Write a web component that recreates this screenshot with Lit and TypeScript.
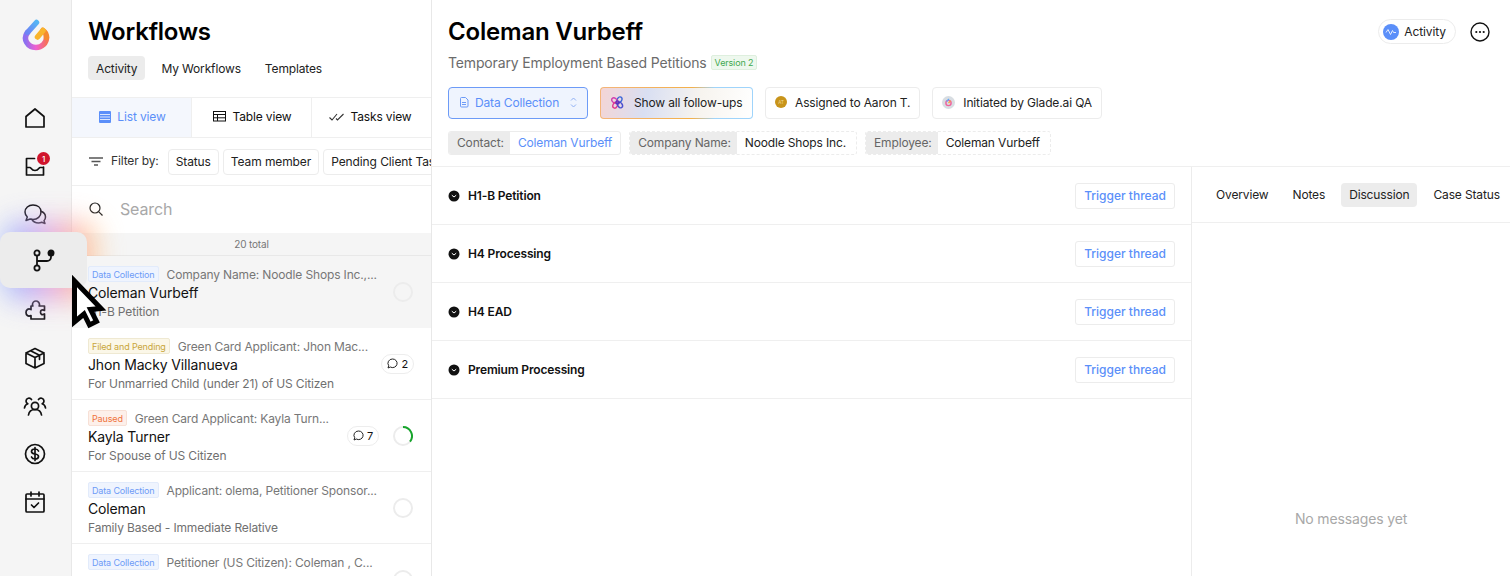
import { LitElement, html, css, svg } from 'lit';
import { customElement } from 'lit/decorators.js';

const stroke = (body: unknown, w = 1.7) => html`<svg width="24" height="24" viewBox="0 0 24 24" fill="none" stroke="#111" stroke-width=${w} stroke-linecap="round" stroke-linejoin="round">${body}</svg>`;

const NAV = [
  { icon: stroke(svg`<path d="M3 21V10.500L12 3l9 7.500V21z"/>`) },
  { icon: stroke(svg`<path d="M3.500 4.500v16.500h17V13M3.500 13.500H7c1 0 1.400 3 5 3s4-3 5-3h3.500M3.500 4.500h8"/>`), badge: '1' },
  { icon: stroke(svg`<path d="M10 3C5.500 3 2 6 2 10c0 2 .9 3.700 2.300 5L3 18.500l4.200-1.500c.9.3 1.800.4 2.800.4 4.500 0 8-3 8-7.400S14.500 3 10 3z"/><path d="M18 9.200c2.700 1 4.500 3.200 4.500 5.800 0 1.500-.5 2.800-1.500 3.800l1 2.700-3.300-1.200c-1 .4-2 .6-3.200.6-3 0-5.500-1.300-6.700-3.500"/>`, 1.5) },
  { icon: stroke(svg`<circle cx="6" cy="5" r="2.600"/><circle cx="6" cy="20" r="2.600"/><circle cx="20" cy="5" r="2.600" fill="#111"/><path d="M6 7.600v9.800M6 13h10a4 4 0 0 0 4-4V7.600"/>`, 1.8), active: true },
  { icon: stroke(svg`<g transform="translate(1.500 0)"><path d="M8 6.500a3.500 3.500 0 1 1 7 0c0 .8-.3 1.200-.3 1.500H20v4.500c-3-1.500-4 .2-4 1.700s1 3.300 4 1.800V21H6.500v-3.500C3.500 19 1.500 17 1.500 14.500S3.500 10 6.500 11.500V8H8.300c0-.4-.3-.8-.3-1.500z"/></g>`) },
  { icon: stroke(svg`<path d="M12 2.500l9 4.500v10.500l-9 4.500-9-4.500V7zM3 7l9 4.500L21 7M12 11.500V22M7.500 4.800l9 4.500v4"/>`) },
  { icon: stroke(svg`<circle cx="12" cy="12" r="3.600"/><path d="M5.500 21c.5-3.500 3-5.500 6.500-5.500s6 2 6.500 5.500M8.500 5.500a3 3 0 0 0-5.500 1.500c0 1.300.8 2.200 1.800 2.800C3 10.500 1.700 12 1.500 14M15.500 5.500A3 3 0 0 1 21 7c0 1.300-.8 2.200-1.800 2.800 1.800.7 3.100 2.200 3.300 4.200"/>`) },
  { icon: stroke(svg`<circle cx="12" cy="12" r="9.500"/><path d="M15.500 9c-.5-1.300-2-2-3.500-2-2 0-3.500 1-3.500 2.500S10 11.700 12 12s3.500 1 3.500 2.500S14 17 12 17c-1.500 0-3-.7-3.500-2M12 5.500v13"/>`) },
  { icon: stroke(svg`<rect x="3" y="4" width="18" height="18" rx="1"/><path d="M3 9h18M8 2v4M16 2v4M8.500 15l2.500 2.500 4.500-4.500"/>`) },
];

const ITEMS = [
  { tag: 'Data Collection', kind: 'blue', meta: 'Company Name: Noodle Shops Inc.,...', name: 'Coleman Vurbeff', sub: 'H1-B Petition', ring: true, selected: true },
  { tag: 'Filed and Pending', kind: 'gold', meta: 'Green Card Applicant: Jhon Mac...', name: 'Jhon Macky Villanueva', sub: 'For Unmarried Child (under 21) of US Citizen', count: '2' },
  { tag: 'Paused', kind: 'red', meta: 'Green Card Applicant: Kayla Turn...', name: 'Kayla Turner', sub: 'For Spouse of US Citizen', count: '7', ring: true, progress: true },
  { tag: 'Data Collection', kind: 'blue', meta: 'Applicant: olema, Petitioner Sponsor...', name: 'Coleman', sub: 'Family Based - Immediate Relative', ring: true },
  { tag: 'Data Collection', kind: 'blue', meta: 'Petitioner (US Citizen): Coleman , C...', name: '', sub: '', ring: true },
];

const THREADS = ['H1-B Petition', 'H4 Processing', 'H4 EAD', 'Premium Processing'];

@customElement('app-root')
export class AppRoot extends LitElement {
  static override styles = css`
    * { box-sizing: border-box; }
    :host {
      display: flex;
      position: relative;
      width: 1510px;
      height: 576px;
      overflow: hidden;
      background: #fff;
      color: #111;
      font-family: Inter, "Liberation Sans", sans-serif;
      font-size: 12px;
      letter-spacing: -0.012em;
    }
    svg { display: block; flex: none; }

    .rail {
      width: 72px;
      flex: none;
      background: #f5f5f5;
      border-right: 1px solid #e8e8e8;
      position: relative;
      z-index: 2;
    }
    .logo { padding: 18px 0 0 21px; height: 94px; }
    .nav-item {
      height: 48px;
      display: flex;
      align-items: center;
      padding-left: 23px;
      position: relative;
    }
    .badge {
      position: absolute;
      left: 37px;
      top: 10px;
      width: 13px;
      height: 13px;
      border-radius: 50%;
      background: #d0142c;
      color: #fff;
      font-size: 8px;
      font-weight: 500;
      display: flex;
      align-items: center;
      justify-content: center;
    }
    .glow-clip {
      position: absolute;
      left: -30px;
      top: -50px;
      width: 170px;
      height: 150px;
      clip-path: polygon(0 0, 100% 0, 100% 68px, 102px 68px, 102px 100%, 0 100%);
      pointer-events: none;
    }
    .glow {
      position: absolute;
      left: 34px;
      top: 34px;
      width: 92px;
      height: 78px;
      border-radius: 16px;
      background: linear-gradient(90deg, #7fb0ff 0%, #b79cf5 30%, #f39ad0 60%, #ffb27a 85%, #ffd9a0 100%);
      filter: blur(14px);
      opacity: 0.8;
    }
    .nav-item.active { z-index: 3; }
    .tile {
      position: absolute;
      left: 0;
      top: -6px;
      width: 87px;
      height: 56px;
      background: #ececec;
      border-radius: 10px;
      display: flex;
      align-items: center;
      padding-left: 31px;
    }

    .list {
      width: 360px;
      flex: none;
      border-right: 1px solid #e8e8e8;
      display: flex;
      flex-direction: column;
      overflow: hidden;
    }
    .list-head { padding: 17px 16px 0; height: 97px; flex: none; }
    h1 { margin: 0; font-size: 24px; line-height: 30px; font-weight: 600; letter-spacing: -0.2px; color: #000; }
    .tabs { display: flex; gap: 8px; margin-top: 9px; }
    .tab {
      height: 24px;
      padding: 0 8px;
      border-radius: 4px;
      display: flex;
      align-items: center;
      font-size: 12px;
      color: #222;
    }
    .tab.on { background: #ececec; }
    .views {
      display: grid;
      grid-template-columns: 120px 120px 120px;
      height: 41px;
      flex: none;
      border-top: 1px solid #efefef;
      border-bottom: 1px solid #efefef;
    }
    .view {
      display: flex;
      align-items: center;
      justify-content: center;
      gap: 6px;
      font-size: 12px;
      padding: 0 0 2px 2px;
      border-right: 1px solid #efefef;
    }
    .view:last-child { border-right: 0; padding: 0 3px 2px 0; }
    .view.on { background: #f4f7fd; color: #5b8ff9; }
    .filters {
      height: 48px;
      flex: none;
      display: flex;
      align-items: center;
      padding-left: 17px;
      border-bottom: 1px solid #efefef;
      white-space: nowrap;
    }
    .filters .lbl { margin: 0 9px 2px 8px; color: #333; }
    .chip {
      height: 26px;
      padding: 0 7px;
      border: 1px solid #ececec;
      border-radius: 4px;
      display: flex;
      align-items: center;
      margin-right: 4px;
      flex: none;
      color: #222;
      letter-spacing: -0.1px;
    }
    .search {
      height: 47px;
      display: flex;
      align-items: center;
      padding: 0 0 1px 17px;
      gap: 17px;
      font-size: 16px;
      color: #a8a8a8;
      flex: none;
    }
    .total {
      height: 23px;
      flex: none;
      background: #f5f5f5;
      border-bottom: 1px solid #e8e8e8;
      font-size: 10px;
      color: #777;
      display: flex;
      align-items: center;
      justify-content: center;
    }
    .item {
      height: 72px;
      flex: none;
      display: flex;
      align-items: center;
      padding: 0 18px 0 16px;
      border-bottom: 1px solid #efefef;
    }
    .item.sel { background: #f5f5f5; border-bottom: 0; }
    .item-body { flex: 1; min-width: 0; align-self: flex-start; padding-top: 9px; }
    .item-top { display: flex; align-items: center; gap: 8px; height: 18px; font-size: 12px; color: #777; white-space: nowrap; }
    .tag {
      height: 16px;
      padding: 0 3px;
      border-radius: 2px;
      font-size: 9px;
      display: flex;
      align-items: center;
      border: 1px solid;
      flex: none;
    }
    .tag.blue { color: #6d9bf7; background: #eff4fe; border-color: #e2ebfb; }
    .tag.gold { color: #c9a63a; background: #fbf7e8; border-color: #efe9d2; }
    .tag.red { color: #f0733c; background: #fdf0ea; border-color: #f7e0d6; }
    .item-name { font-size: 14px; line-height: 20px; color: #111; }
    .item-sub { font-size: 12px; line-height: 16px; margin-top: 1px; color: #707070; white-space: nowrap; }
    .count {
      height: 20px;
      padding: 0 5px;
      border: 1px solid #ededed;
      border-radius: 10px;
      display: flex;
      align-items: center;
      gap: 3px;
      font-size: 11px;
      background: #fff;
      flex: none;
    }
    .count.solo { margin-right: -1px; }
    .ring { margin-left: 14px; flex: none; }

    .main { flex: 1; min-width: 0; display: flex; flex-direction: column; }
    .main-head { height: 167px; padding: 17px 16px 0; border-bottom: 1px solid #efefef; position: relative; flex: none; }
    .subtitle { display: flex; align-items: center; gap: 4px; margin-top: 6px; height: 19px; font-size: 14px; color: #6b6b6b; }
    .ver {
      height: 15px;
      padding: 0 3px;
      font-size: 9px;
      color: #3fa84f;
      background: #eef8ee;
      border: 1px solid #deefde;
      border-radius: 2px;
      display: flex;
      align-items: center;
    }
    .actions { display: flex; gap: 12px; margin-top: 15px; white-space: nowrap; }
    .btn {
      height: 32px;
      padding: 0 9px 2px;
      border: 1px solid #ececec;
      border-radius: 4px;
      display: flex;
      align-items: center;
      gap: 7px;
      font-size: 12px;
      color: #222;
      background: #fff;
      flex: none;
    }
    .btn.stage { width: 140px; background: #eff4fe; border-color: #6d9bf7; color: #5b8ff9; padding: 0 10px 2px; gap: 5px; }
    .btn.stage .grow { flex: 1; }
    .btn.ai {
      width: 153px;
      padding: 0 9px 2px 10px;
      gap: 10px;
      border-color: transparent;
      background:
        linear-gradient(100deg, #f4d5d5 0%, #d9dff2 30%, #f7f4ef 65%, #fff 100%) padding-box,
        linear-gradient(90deg, #f4b57a 0%, #f3b04a 60%, #9fd4fb 75%, #9fd4fb 100%) border-box;
    }
    .btn.avatar { gap: 8px; }
    .fields { display: flex; gap: 8px; margin-top: 12px; }
    .field {
      height: 24px;
      display: flex;
      align-items: stretch;
      border: 1px solid #ececec;
      border-radius: 3px;
      overflow: hidden;
      font-size: 12px;
    }
    .field.dash { border-style: dashed; }
    .field .k { background: #ececec; color: #666; padding: 0 6px 2px 8px; display: flex; align-items: center; }
    .field .v { padding: 0 8px 2px; display: flex; align-items: center; color: #222; }
    .field.dash .v { padding-right: 10px; }
    .field .v.link { color: #5b8ff9; }
    .head-right { position: absolute; right: 20px; top: 19px; display: flex; align-items: center; gap: 14px; }
    .pill {
      height: 25px;
      padding: 0 9px 0 4px;
      border: 1px solid #ececec;
      border-radius: 13px;
      display: flex;
      align-items: center;
      gap: 5px;
      font-size: 12px;
      color: #222;
      letter-spacing: -0.1px;
    }

    .split { flex: 1; display: flex; min-height: 0; }
    .threads { width: 760px; flex: none; border-right: 1px solid #ececec; }
    .thread {
      height: 58px;
      display: flex;
      align-items: center;
      padding: 0 16px;
      gap: 8px;
      border-bottom: 1px solid #efefef;
      font-size: 12px;
      font-weight: 600;
      color: #111;
    }
    .thread .grow { flex: 1; }
    .trigger {
      height: 26px;
      padding: 0 8px;
      border: 1px solid #ececec;
      border-radius: 3px;
      display: flex;
      align-items: center;
      color: #5b8ff9;
      font-weight: 500;
      letter-spacing: 0;
    }
    .panel { flex: 1; min-width: 0; display: flex; flex-direction: column; }
    .panel-tabs {
      height: 56px;
      flex: none;
      display: flex;
      align-items: center;
      gap: 8px;
      padding-left: 16px;
      border-bottom: 1px solid #efefef;
      white-space: nowrap;
    }
    .empty {
      flex: 1;
      display: flex;
      justify-content: center;
      align-items: flex-start;
      font-size: 14px;
      color: #a8a8a8;
      padding-top: 287px;
    }
    .cursor { position: absolute; left: 68px; top: 273px; z-index: 5; }
  `;

  override render() {
    return html`
      <aside class="rail">
        <div class="logo">${this.logo()}</div>
        ${NAV.map((n) => html`
          <div class="nav-item ${n.active ? 'active' : ''}">
            ${n.active
              ? html`<div class="glow-clip"><div class="glow"></div></div><div class="tile">${n.icon}</div>`
              : n.icon}
            ${n.badge ? html`<span class="badge">${n.badge}</span>` : ''}
          </div>
        `)}
      </aside>

      <section class="list">
        <div class="list-head">
          <h1>Workflows</h1>
          <div class="tabs">
            <div class="tab on">Activity</div>
            <div class="tab">My Workflows</div>
            <div class="tab">Templates</div>
          </div>
        </div>
        <div class="views">
          <div class="view on">
            <svg width="12" height="12" viewBox="0 0 12 12"><rect width="12" height="12" rx="1" fill="#5b8ff9"/><path d="M1 3.500h10M1 6h10M1 8.500h10" stroke="#dbe6fd"/></svg>
            List view
          </div>
          <div class="view">
            <svg width="13" height="11" viewBox="0 0 13 11" fill="none" stroke="#111"><rect x=".5" y=".5" width="12" height="9.500"/><path d="M.5 3.500h12M.5 6.800h12M4.500 3.500V10"/></svg>
            Table view
          </div>
          <div class="view">
            <svg width="15" height="8" viewBox="0 0 15 8" fill="none" stroke="#333" stroke-width="1.100"><path d="M.5 4.500L3 7 8 1M7 5.500L8.500 7 14.500 1"/></svg>
            Tasks view
          </div>
        </div>
        <div class="filters">
          <svg width="14" height="9" viewBox="0 0 14 9" fill="none" stroke="#555" stroke-width="1.300"><path d="M0 1h14M2.500 4.500h9M5 8h4"/></svg>
          <span class="lbl">Filter by:</span>
          <div class="chip">Status</div>
          <div class="chip">Team member</div>
          <div class="chip">Pending Client Tasks</div>
        </div>
        <div class="search">
          <svg width="14" height="14" viewBox="0 0 14 14" fill="none" stroke="#222" stroke-width="1.200"><circle cx="6" cy="6" r="5"/><path d="M9.800 9.800L13.500 13.500"/></svg>
          <span>Search</span>
        </div>
        <div class="total">20 total</div>
        ${ITEMS.map((it) => html`
          <div class="item ${it.selected ? 'sel' : ''}">
            <div class="item-body">
              <div class="item-top"><span class="tag ${it.kind}">${it.tag}</span><span>${it.meta}</span></div>
              ${it.name ? html`<div class="item-name">${it.name}</div><div class="item-sub">${it.sub}</div>` : ''}
            </div>
            ${it.count ? html`<div class="count ${it.ring ? '' : 'solo'}">${this.bubble()}${it.count}</div>` : ''}
            ${it.ring ? this.ring(!!it.progress) : ''}
          </div>
        `)}
      </section>

      <main class="main">
        <div class="main-head">
          <h1>Coleman Vurbeff</h1>
          <div class="subtitle">Temporary Employment Based Petitions <span class="ver">Version 2</span></div>
          <div class="actions">
            <div class="btn stage">
              <svg width="11" height="12" viewBox="0 0 11 12" fill="none" stroke="#6d9bf7"><path d="M2.500 1.500h4l2.500 2.500v6a1 1 0 0 1-1 1h-5.500a1 1 0 0 1-1-1v-7.500a1 1 0 0 1 1-1zM3 6.500h4M3 8.500h4"/></svg>
              <span>Data Collection</span>
              <span class="grow"></span>
              <svg width="7" height="11" viewBox="0 0 7 11" fill="none" stroke="#8fb0f5"><path d="M1 3.500L3.500 1 6 3.500M1 7.500L3.500 10 6 7.500"/></svg>
            </div>
            <div class="btn ai">
              <svg width="13" height="13" viewBox="0 0 13 13" fill="none" stroke-width="1.400">
                <ellipse cx="8.500" cy="3.800" rx="2.200" ry="3" stroke="#3b66d8" transform="rotate(30 8.500 3.800)"/>
                <ellipse cx="3.500" cy="4.500" rx="2.200" ry="3" stroke="#d13fb0" transform="rotate(-50 3.500 4.500)"/>
                <ellipse cx="4.200" cy="9.200" rx="2.200" ry="3" stroke="#e0398f" transform="rotate(25 4.200 9.200)"/>
                <ellipse cx="9" cy="9" rx="2.200" ry="3" stroke="#4a50d0" transform="rotate(-35 9 9)"/>
                <circle cx="6.500" cy="6.500" r="1.600" stroke="#5b2fc0"/>
              </svg>
              Show all follow-ups
            </div>
            <div class="btn avatar">
              <svg width="12" height="12" viewBox="0 0 12 12"><circle cx="6" cy="6" r="6" fill="#c8941a"/><text x="6" y="7.700" font-size="4.500" text-anchor="middle" fill="#f0d999">AT</text></svg>
              <span>Assigned to Aaron T.</span>
            </div>
            <div class="btn avatar">
              <svg width="13" height="13" viewBox="0 0 13 13" fill="none"><circle cx="6.500" cy="6.500" r="6.500" fill="#d8dde2"/><circle cx="6.500" cy="7" r="2.600" stroke="#f0609c" stroke-width="1.400"/><path d="M4.500 5.500l2.500-2.500" stroke="#5fa8f8" stroke-width="1.300"/><path d="M8.500 5l-2 2" stroke="#f3a63a" stroke-width="1.300"/></svg>
              <span>Initiated by Glade.ai QA</span>
            </div>
          </div>
          <div class="fields">
            <div class="field"><span class="k">Contact:</span><span class="v link">Coleman Vurbeff</span></div>
            <div class="field dash"><span class="k">Company Name:</span><span class="v">Noodle Shops Inc.</span></div>
            <div class="field dash"><span class="k">Employee:</span><span class="v">Coleman Vurbeff</span></div>
          </div>
          <div class="head-right">
            <div class="pill">
              <svg width="16" height="16" viewBox="0 0 16 16" fill="none"><circle cx="8" cy="8" r="8" fill="#5b8ff9"/><path d="M3 8.500l2-3 2.500 5 2-4 1 2H13" stroke="#e3ecfe" stroke-width="1"/></svg>
              Activity
            </div>
            <svg width="20" height="20" viewBox="0 0 20 20" fill="none"><circle cx="10" cy="10" r="9" stroke="#111" stroke-width="1.400"/><circle cx="6.300" cy="10" r="1.100" fill="#111"/><circle cx="10" cy="10" r="1.100" fill="#111"/><circle cx="13.700" cy="10" r="1.100" fill="#111"/></svg>
          </div>
        </div>
        <div class="split">
          <div class="threads">
            ${THREADS.map((t) => html`
              <div class="thread">
                <svg width="12" height="12" viewBox="0 0 12 12"><circle cx="6" cy="6" r="5.500" fill="#111"/><path d="M3.800 5.200l2.200 1.800 2.200-1.800" fill="none" stroke="#fff" stroke-width="1"/></svg>
                <span>${t}</span>
                <span class="grow"></span>
                <div class="trigger">Trigger thread</div>
              </div>
            `)}
          </div>
          <div class="panel">
            <div class="panel-tabs">
              <div class="tab">Overview</div>
              <div class="tab">Notes</div>
              <div class="tab on">Discussion</div>
              <div class="tab">Case Status</div>
            </div>
            <div class="empty">No messages yet</div>
          </div>
        </div>
      </main>

      <svg class="cursor" width="42" height="58" viewBox="0 0 42 58"><path d="M6.500 8v41l9.500-8 5.500 11 7-3.500-6-12 10.500-1z" fill="#fff" stroke="#000" stroke-width="5" stroke-linejoin="miter"/></svg>
    `;
  }

  logo() {
    return html`<svg width="32" height="34" viewBox="0 0 32 34" fill="none" stroke-width="5.500" stroke-linecap="round">
      <defs>
        <linearGradient id="lg1" x1="1" y1="0" x2="0" y2="1"><stop offset="0" stop-color="#55b4f5"/><stop offset="1" stop-color="#6d84f5"/></linearGradient>
        <linearGradient id="lg2" x1="0" y1="0" x2="1" y2="0"><stop offset="0" stop-color="#8d70f0"/><stop offset=".5" stop-color="#f05fd0"/><stop offset="1" stop-color="#f5705a"/></linearGradient>
      </defs>
      <path d="M6.500 14.500C1.500 21 6.500 29.500 15 29.500c6 0 10.500-4.500 10.500-10" stroke="url(#lg2)"/>
      <path d="M15.500 4.500L6.500 14.500" stroke="url(#lg1)"/>
      <path d="M25.500 19.500c0-3-1-5.500-3.500-7" stroke="#f58a30"/>
      <path d="M22 12.500L16.500 19" stroke="#f9b42c"/>
    </svg>`;
  }

  bubble() {
    return html`<svg width="11" height="11" viewBox="0 0 11 11" fill="none" stroke="#222"><path d="M5.500 1a4.500 4.300 0 1 1-2.200 8L1 10l.7-2.300A4.500 4.300 0 0 1 5.500 1z"/></svg>`;
  }

  ring(progress: boolean) {
    return html`<svg class="ring" width="20" height="20" viewBox="0 0 20 20" fill="none" stroke-width="2">
      <circle cx="10" cy="10" r="9" stroke="#ececec"/>
      ${progress ? svg`<path d="M10 1a9 9 0 0 1 7 14.600" stroke="#17a52c"/>` : ''}
    </svg>`;
  }
}
